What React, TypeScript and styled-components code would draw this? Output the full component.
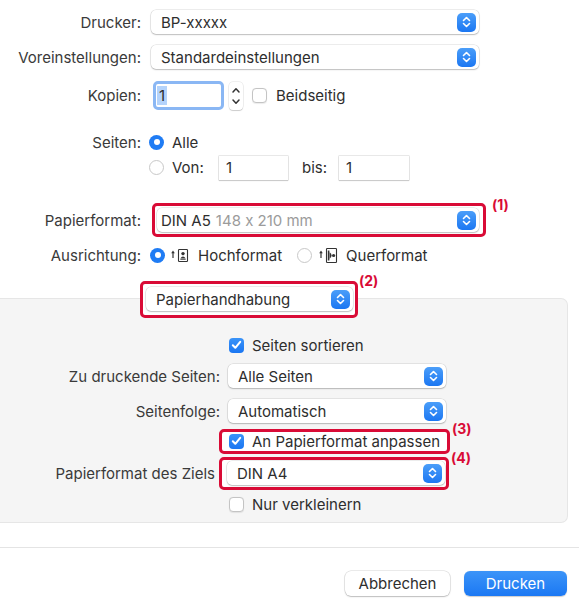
import React from "react";
import styled, { createGlobalStyle } from "styled-components";

const GlobalStyle = createGlobalStyle`
  html, body {
    margin: 0;
    padding: 0;
    background: #fff;
  }
  body {
    font-family: Inter, "Noto Sans", "Liberation Sans", sans-serif;
    font-size: 15px;
    font-feature-settings: "calt" 0;
    color: #2e2e2e;
    -webkit-font-smoothing: antialiased;
  }
`;

const Window = styled.div`
  width: 579px;
  height: 611px;
  overflow: hidden;
  background: #fff;
`;

const Row = styled.div<{ $mt: number; $h: number }>`
  display: flex;
  align-items: center;
  height: ${(p) => p.$h}px;
  margin-top: ${(p) => p.$mt}px;
`;

const Label = styled.div<{ $w: number; $gap: number }>`
  flex: none;
  width: ${(p) => p.$w}px;
  margin-right: ${(p) => p.$gap}px;
  text-align: right;
  white-space: nowrap;
  color: #3a3a3a;
`;

const Text = styled.span<{ $ml?: number; $w?: number }>`
  flex: none;
  margin-left: ${(p) => p.$ml ?? 0}px;
  width: ${(p) => (p.$w ? `${p.$w}px` : "auto")};
  white-space: nowrap;
`;

const Muted = styled.span`
  color: #9b9b9b;
  margin-left: 5px;
`;

const Popup = styled.div<{ $w: number; $indent?: number }>`
  box-sizing: border-box;
  flex: none;
  width: ${(p) => p.$w}px;
  height: 24px;
  display: flex;
  align-items: center;
  justify-content: space-between;
  padding: 0 3px 0 ${(p) => p.$indent ?? 10}px;
  background: #fff;
  border-radius: 5px;
  box-shadow: 0 0 0 0.5px rgba(0, 0, 0, 0.14), 0 1px 1.5px rgba(0, 0, 0, 0.2);
  white-space: nowrap;
`;

const ArrowButton = styled.span`
  flex: none;
  width: 19px;
  height: 19px;
  border-radius: 5px;
  background: linear-gradient(#4b9ef9, #1c77f2);
  display: flex;
  align-items: center;
  justify-content: center;
`;

const Highlight = styled.div<{ $ml: number; $pad: string }>`
  position: relative;
  flex: none;
  margin-left: ${(p) => p.$ml}px;
  padding: ${(p) => p.$pad};
  border: 3px solid #d90b36;
  border-radius: 5px;
  background: #fff;
  display: flex;
  align-items: center;
`;

const Callout = styled.span<{ $dx: number; $dy: number }>`
  position: absolute;
  left: calc(100% + ${(p) => p.$dx}px);
  top: ${(p) => p.$dy}px;
  font-size: 14px;
  line-height: 15px;
  font-weight: 700;
  color: #d90b36;
  white-space: nowrap;
`;

const CopiesField = styled.div`
  flex: none;
  margin-left: 2px;
  width: 64px;
  height: 23px;
  border: 3px solid #8ab7f4;
  border-radius: 5px;
  background: #fff;
  display: flex;
  align-items: center;
  padding-left: 1px;
`;

const Selected = styled.span`
  background: #b4d3fb;
  padding: 1px 2px;
  line-height: 17px;
`;

const Stepper = styled.div`
  flex: none;
  margin-left: 5px;
  width: 14px;
  height: 28px;
  border-radius: 4px;
  background: #fff;
  box-shadow: 0 0 0 0.5px rgba(0, 0, 0, 0.12), 0 1px 1px rgba(0, 0, 0, 0.15);
  display: flex;
  align-items: center;
  justify-content: center;
`;

const TextField = styled.div<{ $ml: number; $w: number }>`
  box-sizing: border-box;
  flex: none;
  margin-left: ${(p) => p.$ml}px;
  width: ${(p) => p.$w}px;
  height: 24px;
  padding-left: 7px;
  display: flex;
  align-items: center;
  background: #fff;
  box-shadow: 0 0 0 0.5px rgba(0, 0, 0, 0.18), 0 1px 1px rgba(0, 0, 0, 0.12);
`;

const Check = styled.span<{ $on?: boolean; $ml: number }>`
  box-sizing: border-box;
  flex: none;
  margin-left: ${(p) => p.$ml}px;
  width: 15px;
  height: 15px;
  border-radius: 4px;
  display: flex;
  align-items: center;
  justify-content: center;
  background: ${(p) => (p.$on ? "linear-gradient(#3a93f8, #1a76f2)" : "#fff")};
  border: ${(p) => (p.$on ? "none" : "1px solid #c4c4c4")};
  box-shadow: ${(p) => (p.$on ? "none" : "0 0.5px 1px rgba(0,0,0,0.08)")};
`;

const Radio = styled.span<{ $on?: boolean; $ml: number }>`
  box-sizing: border-box;
  flex: none;
  margin-left: ${(p) => p.$ml}px;
  width: 15px;
  height: 15px;
  border-radius: 50%;
  background: ${(p) => (p.$on ? "#1f7cf4" : "#fff")};
  border: ${(p) => (p.$on ? "none" : "1px solid #c8c8c8")};
  display: flex;
  align-items: center;
  justify-content: center;

  &::after {
    content: "";
    display: ${(p) => (p.$on ? "block" : "none")};
    width: 6px;
    height: 6px;
    border-radius: 50%;
    background: #fff;
  }
`;

const OrientIcon = styled.svg<{ $ml: number }>`
  flex: none;
  margin-left: ${(p) => p.$ml}px;
`;

const SectionHead = styled.div`
  position: relative;
  z-index: 1;
`;

const Panel = styled.div`
  margin: -20px 11px 0 0;
  padding: 38px 0 10px;
  background: #f5f5f5;
  border: 1px solid #e6e6e6;
  border-left: none;
  border-radius: 0 7px 7px 0;
`;

const Footer = styled.div`
  margin-top: 24px;
  border-top: 1px solid #e4e4e4;
  display: flex;
  justify-content: flex-end;
  gap: 14px;
  padding: 23px 12px 0 0;
`;

const Button = styled.button<{ $primary?: boolean; $w: number }>`
  width: ${(p) => p.$w}px;
  height: 25px;
  border: none;
  border-radius: 6px;
  font-family: inherit;
  font-size: 15px;
  color: ${(p) => (p.$primary ? "#fff" : "#2e2e2e")};
  background: ${(p) => (p.$primary ? "linear-gradient(#3c94f8, #1b78f3)" : "#fff")};
  box-shadow: ${(p) =>
    p.$primary
      ? "0 0.5px 1px rgba(0,0,0,0.2)"
      : "0 0 0 0.5px rgba(0,0,0,0.16), 0 1px 1.5px rgba(0,0,0,0.2)"};
`;

const UpDown = () => (
  <svg width="11" height="14" viewBox="0 0 11 14">
    <path
      d="M2.5 5.5 L5.5 2.5 L8.5 5.5 M2.5 8.5 L5.5 11.5 L8.5 8.5"
      stroke="#fff"
      strokeWidth="1.6"
      fill="none"
      strokeLinecap="round"
      strokeLinejoin="round"
    />
  </svg>
);

const Select = ({ w, indent, children }: { w: number; indent?: number; children: React.ReactNode }) => (
  <Popup $w={w} $indent={indent}>
    <span>{children}</span>
    <ArrowButton>
      <UpDown />
    </ArrowButton>
  </Popup>
);

const Tick = () => (
  <svg width="11" height="10" viewBox="0 0 11 10">
    <path
      d="M1.8 5.2 L4.3 7.8 L9.2 1.8"
      stroke="#fff"
      strokeWidth="2"
      fill="none"
      strokeLinecap="round"
      strokeLinejoin="round"
    />
  </svg>
);

const Portrait = () => (
  <OrientIcon $ml={6} width="19" height="15" viewBox="0 0 19 15">
    <path d="M2 4 L2 10" stroke="#333" strokeWidth="1.2" />
    <path d="M0.2 5.2 L2 2.6 L3.8 5.2 Z" fill="#333" />
    <rect x="7.5" y="1.5" width="9" height="12" rx="0.8" fill="#fff" stroke="#333" strokeWidth="1.1" />
    <circle cx="12" cy="5.6" r="1.7" fill="#333" />
    <path d="M9.3 10.6 Q12 6.6 14.7 10.6 Z" fill="#333" />
    <path d="M9.3 11.4 L14.7 11.4" stroke="#333" strokeWidth="0.8" />
  </OrientIcon>
);

const Landscape = () => (
  <OrientIcon $ml={7} width="19" height="15" viewBox="0 0 19 15">
    <path d="M2 4 L2 10" stroke="#333" strokeWidth="1.2" />
    <path d="M0.2 5.2 L2 2.6 L3.8 5.2 Z" fill="#333" />
    <rect x="7.5" y="0.5" width="10" height="14" rx="0.8" fill="#fff" stroke="#333" strokeWidth="1.1" />
    <path d="M9.6 2.5 L9.6 12.5" stroke="#333" strokeWidth="1.6" />
    <path d="M10.6 4.3 Q14.6 7.5 10.6 10.7 Z" fill="#333" />
    <circle cx="14.6" cy="7.5" r="1.6" fill="#333" />
  </OrientIcon>
);

export default function App() {
  return (
    <Window>
      <GlobalStyle />

      <Row $mt={10} $h={24}>
        <Label $w={141} $gap={10}>Drucker:</Label>
        <Select w={328}>BP-xxxxx</Select>
      </Row>
      <Row $mt={11} $h={24}>
        <Label $w={141} $gap={10}>Voreinstellungen:</Label>
        <Select w={328}>Standardeinstellungen</Select>
      </Row>
      <Row $mt={12} $h={29}>
        <Label $w={141} $gap={10}>Kopien:</Label>
        <CopiesField>
          <Selected>1</Selected>
        </CopiesField>
        <Stepper>
          <svg width="10" height="24" viewBox="0 0 10 24">
            <path
              d="M2 8 L5 4.8 L8 8 M2 16 L5 19.2 L8 16"
              stroke="#333"
              strokeWidth="1.5"
              fill="none"
              strokeLinecap="round"
              strokeLinejoin="round"
            />
          </svg>
        </Stepper>
        <Check $ml={9} />
        <Text $ml={9}>Beidseitig</Text>
      </Row>

      <Row $mt={24} $h={16}>
        <Label $w={141} $gap={8}>Seiten:</Label>
        <Radio $on $ml={0} />
        <Text $ml={8}>Alle</Text>
      </Row>
      <Row $mt={5} $h={25}>
        <Label $w={141} $gap={8} />
        <Radio $ml={0} />
        <Text $ml={8} $w={47}>Von:</Text>
        <TextField $ml={0} $w={69}>1</TextField>
        <Text $ml={14} $w={37}>bis:</Text>
        <TextField $ml={0} $w={70}>1</TextField>
      </Row>

      <Row $mt={23} $h={34}>
        <Label $w={141} $gap={0}>Papierformat:</Label>
        <Highlight $ml={11} $pad="2px 4px 2px 2px">
          <Select w={322} indent={4}>
            DIN A5<Muted>148 x 210 mm</Muted>
          </Select>
          <Callout $dx={9} $dy={-9}>(1)</Callout>
        </Highlight>
      </Row>
      <Row $mt={10} $h={16}>
        <Label $w={141} $gap={9}>Ausrichtung:</Label>
        <Radio $on $ml={0} />
        <Portrait />
        <Text $ml={8}>Hochformat</Text>
        <Radio $ml={15} />
        <Landscape />
        <Text $ml={8}>Querformat</Text>
      </Row>

      <SectionHead>
        <Row $mt={18} $h={37}>
          <Highlight $ml={140} $pad="3px 2px 4px 3px">
            <Select w={207}>Papierhandhabung</Select>
            <Callout $dx={4} $dy={-11}>(2)</Callout>
          </Highlight>
        </Row>
      </SectionHead>

      <Panel>
        <Row $mt={0} $h={16}>
          <Label $w={220} $gap={0} />
          <Check $on $ml={9}>
            <Tick />
          </Check>
          <Text $ml={8}>Seiten sortieren</Text>
        </Row>
        <Row $mt={11} $h={24}>
          <Label $w={220} $gap={8}>Zu druckende Seiten:</Label>
          <Select w={218}>Alle Seiten</Select>
        </Row>
        <Row $mt={11} $h={24}>
          <Label $w={220} $gap={8}>Seitenfolge:</Label>
          <Select w={218}>Automatisch</Select>
        </Row>
        <Row $mt={4} $h={28}>
          <Label $w={219} $gap={0} />
          <Highlight $ml={0} $pad="0 0 0 7px">
            <Check $on $ml={0}>
              <Tick />
            </Check>
            <Text $ml={8} $w={195}>An Papierformat anpassen</Text>
            <Callout $dx={5} $dy={-11}>(3)</Callout>
          </Highlight>
        </Row>
        <Row $mt={2} $h={33}>
          <Label $w={215} $gap={4}>Papierformat des Ziels</Label>
          <Highlight $ml={0} $pad="1px 1px 2px 5px">
            <Select w={218}>DIN A4</Select>
            <Callout $dx={5} $dy={-10}>(4)</Callout>
          </Highlight>
        </Row>
        <Row $mt={6} $h={16}>
          <Label $w={220} $gap={0} />
          <Check $ml={9} />
          <Text $ml={8}>Nur verkleinern</Text>
        </Row>
      </Panel>

      <Footer>
        <Button $w={105}>Abbrechen</Button>
        <Button $primary $w={103}>Drucken</Button>
      </Footer>
    </Window>
  );
}
